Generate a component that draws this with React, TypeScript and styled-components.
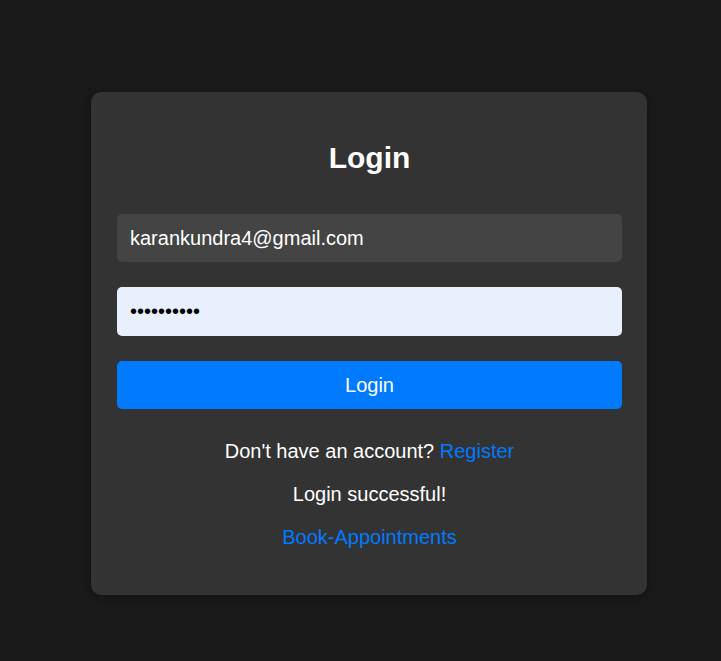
import React from "react";
import styled, { createGlobalStyle } from "styled-components";

const Global = createGlobalStyle`
  html, body { margin: 0; padding: 0; background: #1a1a1a; }
  body { font-family: "Liberation Sans", Arial, sans-serif; color: #fff; }
`;

const Page = styled.div`
  min-height: 661px;
  display: flex;
  justify-content: flex-start;
  padding: 92px 0 0 91px;
  box-sizing: border-box;
`;

const Card = styled.div`
  width: 556px;
  height: 503px;
  box-sizing: border-box;
  background: #333333;
  border-radius: 10px;
  box-shadow: 0 2px 8px rgba(0, 0, 0, 0.35);
  padding: 49px 25px 0 26px;
  display: flex;
  flex-direction: column;
`;

const Title = styled.h2`
  margin: 0 0 39px;
  font-size: 30px;
  line-height: 34px;
  font-weight: 700;
  text-align: center;
  color: #fff;
`;

const Form = styled.form`
  display: flex;
  flex-direction: column;
  gap: 25px;
`;

const Input = styled.input<{ $filled?: boolean }>`
  height: ${(p) => (p.$filled ? "49px" : "48px")};
  box-sizing: border-box;
  border: none;
  outline: none;
  border-radius: 5px;
  padding: 0 13px;
  font-family: "Liberation Sans", Arial, sans-serif;
  font-size: 20px;
  background: ${(p) => (p.$filled ? "#e8f0fe" : "#444444")};
  color: ${(p) => (p.$filled ? "#000" : "#fff")};
`;

const Button = styled.button`
  height: 48px;
  border: none;
  border-radius: 5px;
  background: #007bff;
  color: #fff;
  font-family: "Liberation Sans", Arial, sans-serif;
  font-size: 20px;
  cursor: pointer;
`;

const Line = styled.p<{ $first?: boolean }>`
  margin: ${(p) => (p.$first ? "31px" : "20px")} 0 0;
  font-size: 20px;
  line-height: 23px;
  text-align: center;
  color: #fff;
`;

const Link = styled.a`
  color: #007bff;
  text-decoration: none;
`;

export default function App() {
  return (
    <>
      <Global />
      <Page>
        <Card>
          <Title>Login</Title>
          <Form onSubmit={(e) => e.preventDefault()}>
            <Input type="email" defaultValue="karankundra4@gmail.com" />
            <Input $filled type="password" defaultValue="karan12345" />
            <Button type="submit">Login</Button>
          </Form>
          <Line $first>
            Don't have an account? <Link href="#">Register</Link>
          </Line>
          <Line>Login successful!</Line>
          <Line>
            <Link href="#">Book-Appointments</Link>
          </Line>
        </Card>
      </Page>
    </>
  );
}
